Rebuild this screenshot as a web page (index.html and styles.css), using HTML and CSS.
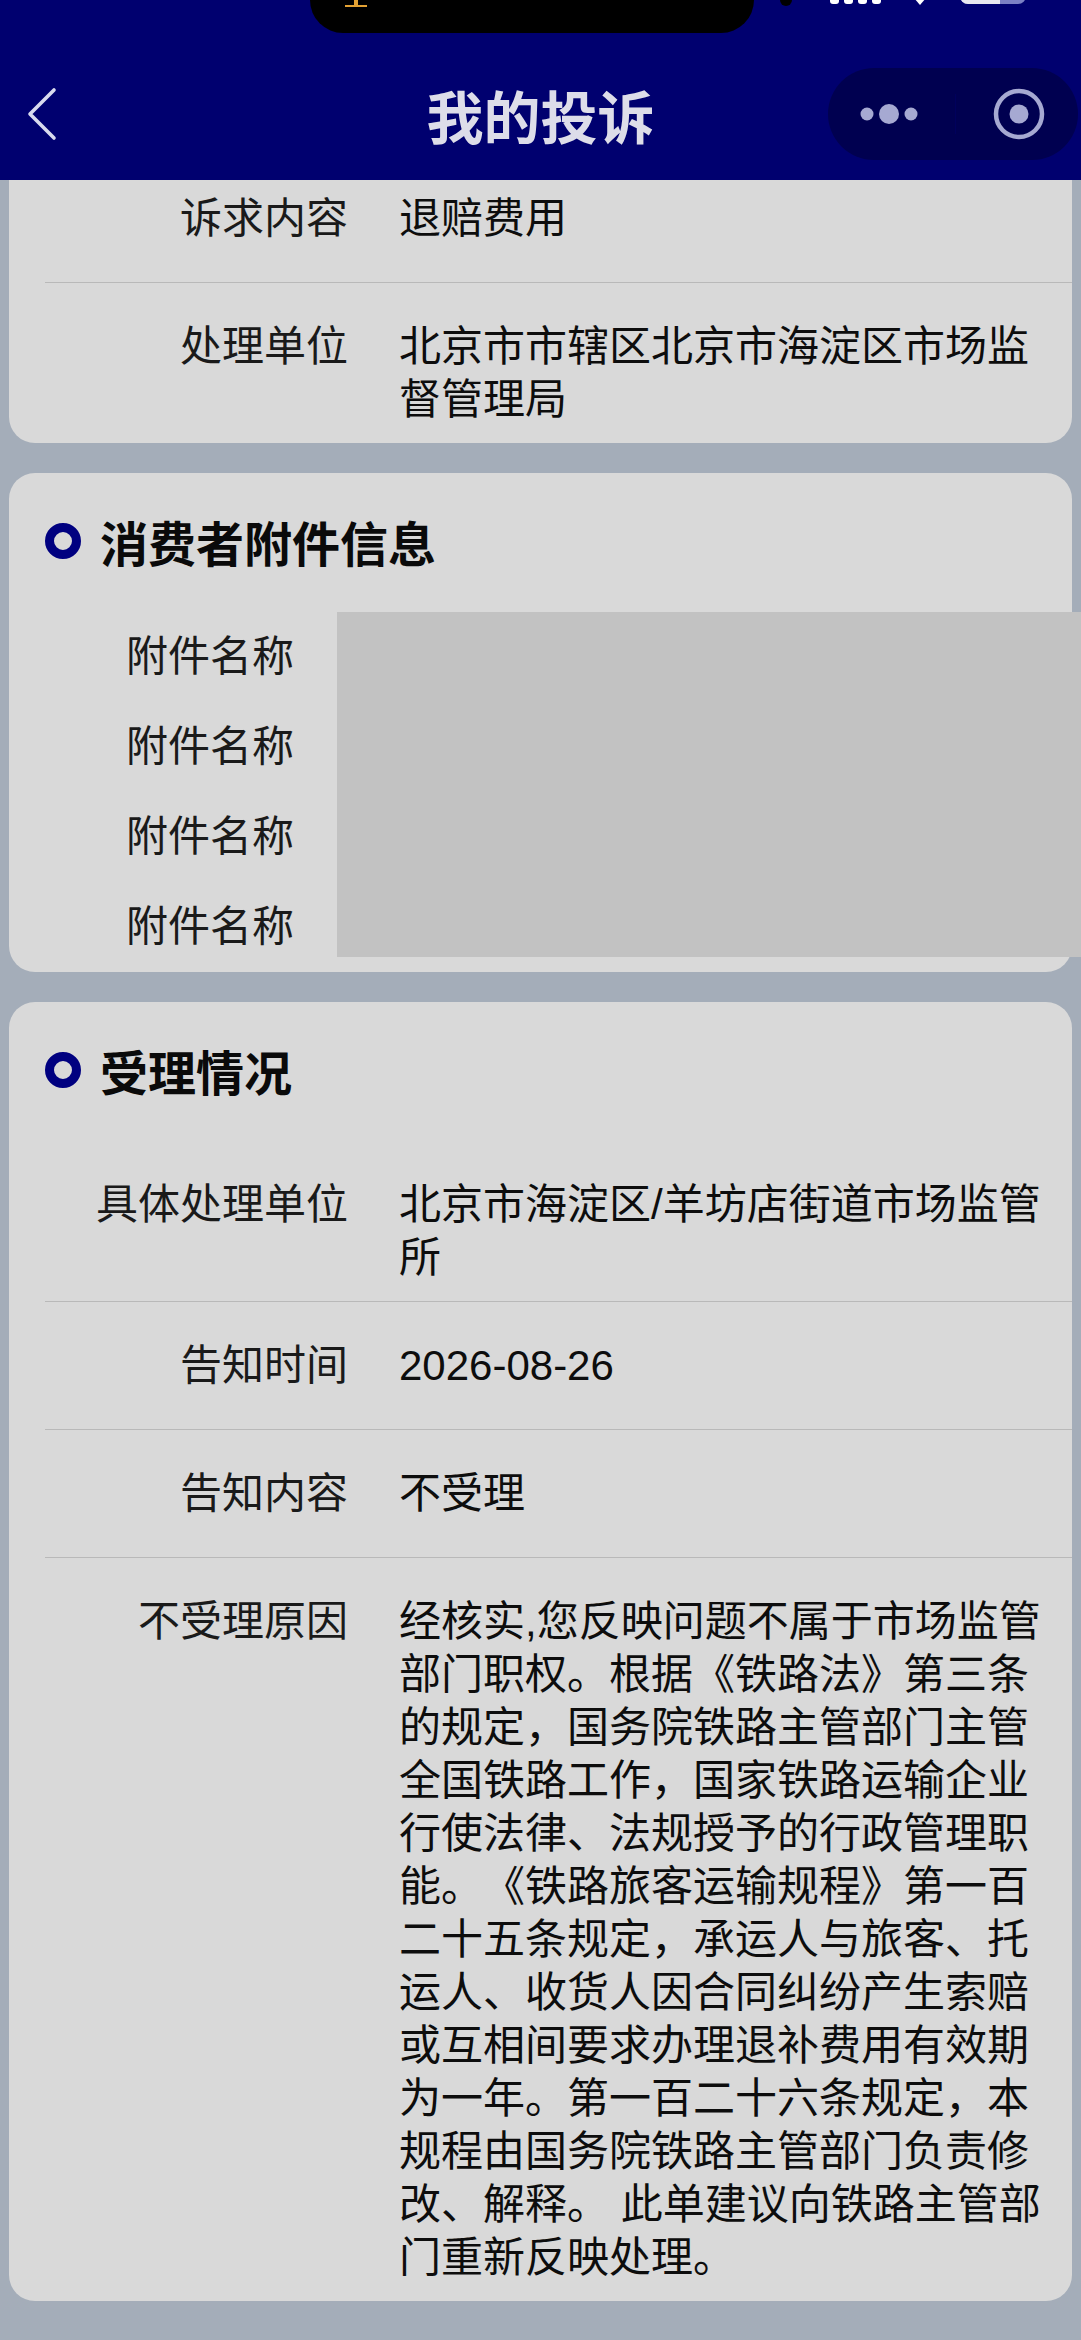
FILE: index.html
```html
<!DOCTYPE html>
<html lang="zh-CN">
<head>
<meta charset="utf-8">
<title>我的投诉</title>
<link rel="stylesheet" href="styles.css">
</head>
<body>
<div class="screen">
  <header class="topbar">
    <span class="time">00:00</span>
    <div class="island"><span class="island-mark"></span></div>
    <span class="cam"></span>
    <svg class="sys" width="220" height="8" viewBox="0 0 220 8">
      <rect x="10" y="-12" width="9" height="16" rx="3" fill="#ffffff"/>
      <rect x="24" y="-12" width="9" height="16" rx="3" fill="#ffffff"/>
      <rect x="38" y="-12" width="9" height="16" rx="3" fill="#ffffff"/>
      <rect x="52" y="-12" width="9" height="16" rx="3" fill="#ffffff"/>
      <path d="M94 -2 L106 -2 L100 5 Z" fill="#ffffff"/>
      <rect x="140" y="-20" width="66" height="24" rx="8" fill="#7b80c4"/>
      <path d="M148 -20 H180 V4 H148 A8 8 0 0 1 140 -4 V-12 A8 8 0 0 1 148 -20 Z" fill="#e8e8f0"/>
    </svg>
    <div class="nav">
      <div class="nav-left">
        <svg class="back" width="40" height="60" viewBox="0 0 40 60">
          <polyline points="27,6 3,30 27,54" fill="none" stroke="#d8daee" stroke-width="3.6" stroke-linecap="round" stroke-linejoin="round"/>
        </svg>
      </div>
      <h1 class="title">我的投诉</h1>
      <div class="nav-right">
        <div class="capsule">
          <svg class="more" width="80" height="30" viewBox="0 0 80 30">
            <circle cx="17" cy="15" r="6.5" fill="#a6a9d2"/>
            <circle cx="39" cy="15" r="10" fill="#a6a9d2"/>
            <circle cx="61" cy="15" r="6.5" fill="#a6a9d2"/>
          </svg>
          <span class="cap-div"></span>
          <svg class="target" width="56" height="56" viewBox="0 0 56 56">
            <circle cx="28" cy="28" r="23" fill="none" stroke="#a6a9d2" stroke-width="4.5"/>
            <circle cx="28" cy="28" r="9.5" fill="#a6a9d2"/>
          </svg>
        </div>
      </div>
    </div>
  </header>

  <main class="content">
    <section class="card card-cut">
      <div class="row">
        <div class="label">诉求内容</div>
        <div class="val">退赔费用</div>
      </div>
      <div class="row">
        <div class="label">处理单位</div>
        <div class="val">北京市市辖区北京市海淀区市场监督管理局</div>
      </div>
    </section>

    <section class="card">
      <div class="card-title"><span class="ring"></span><span>消费者附件信息</span></div>
      <div class="attach">
        <div class="att-row"><span class="att-label">附件名称</span></div>
        <div class="att-row"><span class="att-label">附件名称</span></div>
        <div class="att-row"><span class="att-label">附件名称</span></div>
        <div class="att-row"><span class="att-label">附件名称</span></div>
        <div class="redact"></div>
      </div>
    </section>

    <section class="card">
      <div class="card-title"><span class="ring"></span><span>受理情况</span></div>
      <div class="row">
        <div class="label">具体处理单位</div>
        <div class="val">北京市海淀区/羊坊店街道市场监管所</div>
      </div>
      <div class="row">
        <div class="label">告知时间</div>
        <div class="val">2026-08-26</div>
      </div>
      <div class="row">
        <div class="label">告知内容</div>
        <div class="val">不受理</div>
      </div>
      <div class="row">
        <div class="label">不受理原因</div>
        <div class="val">经核实,您反映问题不属于市场监管部门职权。根据《铁路法》第三条的规定，国务院铁路主管部门主管全国铁路工作，国家铁路运输企业行使法律、法规授予的行政管理职能。《铁路旅客运输规程》第一百二十五条规定，承运人与旅客、托运人、收货人因合同纠纷产生索赔或互相间要求办理退补费用有效期为一年。第一百二十六条规定，本规程由国务院铁路主管部门负责修改、解释。 此单建议向铁路主管部门重新反映处理。</div>
      </div>
    </section>
  </main>
</div>
</body>
</html>
```

FILE: styles.css
```css
html, body {
  margin: 0;
  padding: 0;
}

body {
  width: 1081px;
  height: 2340px;
  overflow: hidden;
  background: #a4adb9;
  font-family: "Liberation Sans", "Noto Sans CJK SC", sans-serif;
  color: #111111;
  text-spacing-trim: space-all;
}

.screen {
  width: 1081px;
  height: 2340px;
  background: #a4adb9;
}

/* ---------- header ---------- */
.topbar {
  position: relative;
  z-index: 2;
  height: 180px;
  box-sizing: border-box;
  padding-top: 68px;
  background: #00006f;
}

.time {
  position: absolute;
  left: 88px;
  top: -40px;
  font-family: "Liberation Sans", sans-serif;
  font-weight: 700;
  font-size: 46px;
  line-height: 46px;
  color: #ffffff;
  letter-spacing: 1px;
}

.island {
  position: absolute;
  left: 310px;
  top: 0;
  width: 444px;
  height: 33px;
  background: #000000;
  border-radius: 0 0 34px 34px;
}

.island-mark {
  position: absolute;
  left: 35px;
  top: 0;
  width: 22px;
  height: 7px;
  background: linear-gradient(#e3a234, #e3a234) center top / 4px 5px no-repeat,
              linear-gradient(#e3a234, #e3a234) center bottom / 22px 2px no-repeat;
}

.cam {
  position: absolute;
  left: 780px;
  top: -6px;
  width: 12px;
  height: 12px;
  border-radius: 50%;
  background: #000000;
}

.sys {
  position: absolute;
  left: 820px;
  top: 0;
}

.nav {
  display: grid;
  grid-template-columns: 1fr auto 1fr;
  align-items: center;
  height: 92px;
}

.nav-left {
  padding-left: 27px;
  display: flex;
  align-items: center;
}

.back {
  display: block;
}

.title {
  margin: 0;
  font-family: "Noto Sans CJK SC", sans-serif;
  font-weight: 700;
  font-size: 57px;
  line-height: 92px;
  color: #dddde9;
  letter-spacing: 0;
}

.nav-right {
  display: flex;
  justify-content: flex-end;
  padding-right: 3px;
}

.capsule {
  display: flex;
  align-items: center;
  width: 250px;
  height: 92px;
  box-sizing: border-box;
  padding-left: 22px;
  border-radius: 46px;
  background: #000050;
}

.more {
  display: block;
}

.cap-div {
  width: 1px;
  height: 40px;
  margin-left: 25px;
  background: #00005c;
}

.target {
  display: block;
  margin-left: 35px;
}

/* ---------- content ---------- */
.content {
  display: flex;
  flex-direction: column;
  gap: 30px;
  padding: 0 9px;
}

.card {
  background: #d9d9d9;
  border-radius: 26px;
  padding-left: 36px;
}

.card-cut {
  margin-top: -25px;
  border-radius: 0 0 26px 26px;
}

.row {
  display: flex;
  padding: 37px 0 17px;
  border-bottom: 1px solid #b9b9b9;
  font-size: 42px;
  line-height: 53px;
}

.row:last-child {
  border-bottom: none;
}

.label {
  flex: none;
  width: 303px;
  min-height: 73px;
  text-align: right;
  color: #1a1a1a;
}

.val {
  flex: 1;
  margin-left: 51px;
  padding-right: 20px;
  color: #0d0d0d;
}

.card-title {
  display: flex;
  align-items: center;
  gap: 19px;
  padding-top: 40px;
  height: 56px;
  margin-bottom: 43px;
  font-family: "Noto Sans CJK SC", sans-serif;
  font-weight: 700;
  font-size: 48px;
  line-height: 56px;
  color: #0a0a0a;
}

.ring {
  flex: none;
  width: 36px;
  height: 36px;
  box-sizing: border-box;
  border: 9.5px solid #000080;
  border-radius: 50%;
}

.attach {
  position: relative;
}

.att-row {
  height: 90px;
  display: flex;
}

.att-label {
  width: 249px;
  text-align: right;
  font-size: 42px;
  line-height: 90px;
  color: #1a1a1a;
}

.redact {
  position: absolute;
  left: 292px;
  right: -9px;
  top: 0;
  height: 345px;
  background: #c2c2c2;
}
```
